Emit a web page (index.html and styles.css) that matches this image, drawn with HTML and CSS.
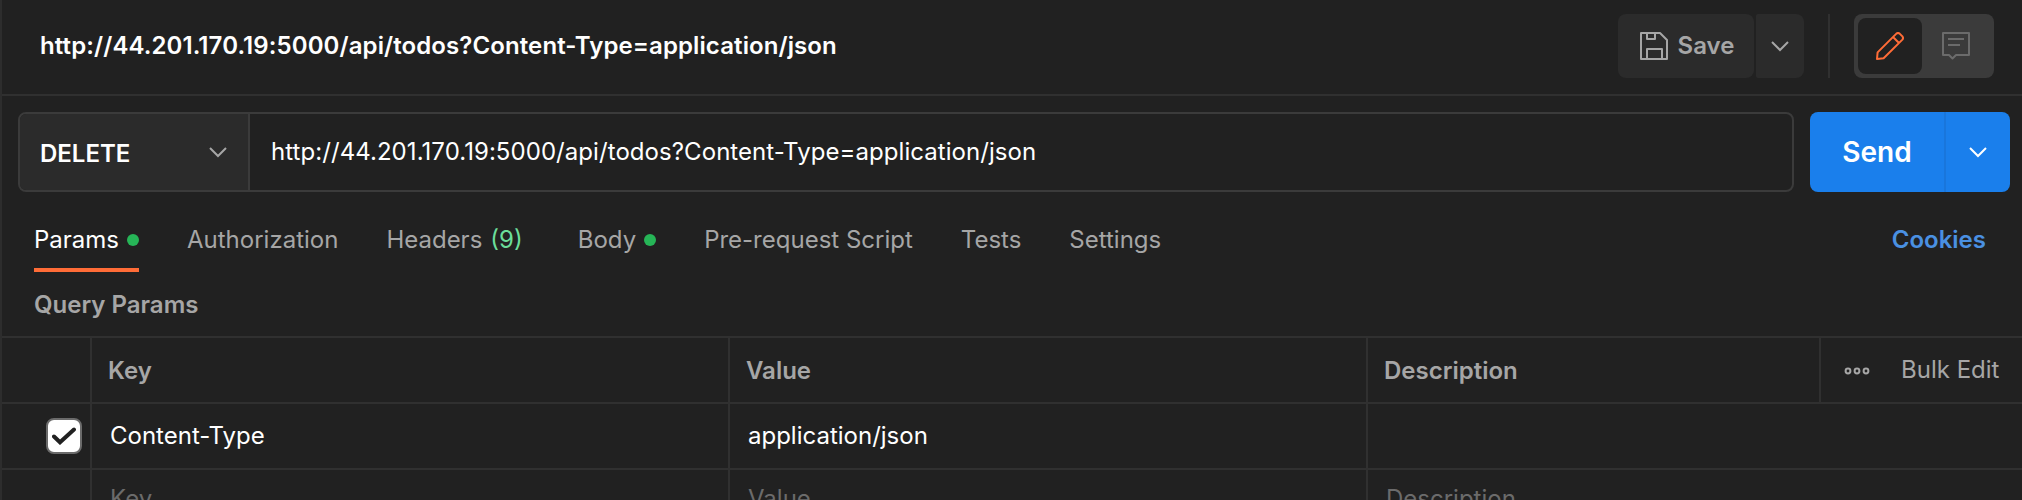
FILE: index.html
```html
<!DOCTYPE html>
<html lang="en">
<head>
<meta charset="utf-8">
<title>Request</title>
<link rel="stylesheet" href="styles.css">
</head>
<body>
<main class="pane">
  <header class="topbar">
    <h1 class="title">http://44.201.170.19:5000/api/todos?Content-Type=application/json</h1>
    <div class="save-group">
      <button class="save">
        <svg width="28" height="28" viewBox="0 0 28 28" fill="none" stroke="currentColor" stroke-width="2" stroke-linejoin="round"><path d="M1 1H20L27 8V27H1ZM7 1V7H15V1M7 27V17H22V27"/></svg>
        <span>Save</span>
      </button>
      <button class="save-more">
        <svg width="18" height="11" viewBox="0 0 18 11" fill="none" stroke="currentColor" stroke-width="2"><path d="M1 1L9 9L17 1"/></svg>
      </button>
    </div>
    <div class="divider"></div>
    <div class="modes">
      <button class="mode mode-active">
        <svg width="28" height="28" viewBox="0 0 28 28" fill="none" stroke="currentColor" stroke-width="2" stroke-linejoin="round"><path d="M1 27L1.6 20.4L20.4 1.6Q22 .4 23.6 1.6L26.4 4.4Q27.6 6 26.4 7.6L7.6 26.2ZM17 5L23 11"/></svg>
      </button>
      <button class="mode">
        <svg width="28" height="28" viewBox="0 0 28 28" fill="none" stroke="currentColor" stroke-width="2" stroke-linejoin="round"><path d="M1 1H27V23H14L10.5 26.5L7 23H1ZM6 7H22M6 13H18"/></svg>
      </button>
    </div>
  </header>

  <section class="request">
    <div class="url-box">
      <div class="method"><span>DELETE</span>
        <svg width="18" height="11" viewBox="0 0 18 11" fill="none" stroke="currentColor" stroke-width="2"><path d="M1 1L9 9L17 1"/></svg>
      </div>
      <div class="url">http://44.201.170.19:5000/api/todos?Content-Type=application/json</div>
    </div>
    <div class="send-group">
      <button class="send">Send</button>
      <button class="send-more">
        <svg width="18" height="11" viewBox="0 0 18 11" fill="none" stroke="currentColor" stroke-width="2"><path d="M1 1L9 9L17 1"/></svg>
      </button>
    </div>
  </section>

  <nav class="tabs">
    <a class="tab tab-active">Params<i class="dot"></i></a>
    <a class="tab">Authorization</a>
    <a class="tab tab-count">Headers<span class="count">(9)</span></a>
    <a class="tab">Body<i class="dot"></i></a>
    <a class="tab">Pre-request Script</a>
    <a class="tab">Tests</a>
    <a class="tab">Settings</a>
    <a class="cookies">Cookies</a>
  </nav>

  <h2 class="subtitle">Query Params</h2>

  <div class="table">
    <div class="row row-head">
      <div class="cell"></div>
      <div class="cell">Key</div>
      <div class="cell">Value</div>
      <div class="cell">Description</div>
      <div class="cell tools">
        <svg width="26" height="8" viewBox="0 0 26 8" fill="none" stroke="currentColor" stroke-width="2"><circle cx="4" cy="4" r="2.4"/><circle cx="13" cy="4" r="2.4"/><circle cx="22" cy="4" r="2.4"/></svg>
        <span>Bulk Edit</span>
      </div>
    </div>
    <div class="row">
      <div class="cell check-cell"><span class="checkbox">
        <svg width="24" height="18" viewBox="0 0 24 18" fill="none" stroke="currentColor" stroke-width="4" stroke-linecap="round"><path d="M2 9.5L8 15.3L22 2.5"/></svg>
      </span></div>
      <div class="cell">Content-Type</div>
      <div class="cell">application/json</div>
      <div class="cell wide"></div>
    </div>
    <div class="row row-empty">
      <div class="cell"></div>
      <div class="cell">Key</div>
      <div class="cell">Value</div>
      <div class="cell wide">Description</div>
    </div>
  </div>
</main>
</body>
</html>
```

FILE: styles.css
```css
* { box-sizing: border-box; }
html, body { margin: 0; height: 500px; overflow: hidden; background: #212121; }
body { font: 24px/32px Inter, "Liberation Sans", sans-serif; color: #fff; }
button { border: 0; padding: 0; margin: 0; background: none; font: inherit; color: inherit; display: flex; align-items: center; justify-content: center; }
svg { display: block; flex: none; }
h1, h2 { margin: 0; font-size: 24px; font-weight: 600; }

.pane { height: 500px; overflow: hidden; border-left: 2px solid #2d2d2d; white-space: nowrap; }

.topbar { height: 96px; padding: 14px 28px 16px 38px; border-bottom: 2px solid #303030; display: flex; color: #a6a6a6; }
.title { flex: 1; line-height: 64px; color: #fff; letter-spacing: .1px; }
.save-group { display: flex; gap: 2px; }
.save { width: 136px; gap: 10px; padding-left: 2px; background: #2b2b2b; border-radius: 8px; font-weight: 600; }
.save-more { width: 48px; background: #2b2b2b; border-radius: 2px 8px 8px 2px; }
.divider { width: 2px; margin: 0 24px; background: #303030; }
.modes { width: 140px; padding: 4px; background: #3b3b3b; border-radius: 8px; display: flex; color: #6b6b6b; }
.mode { width: 64px; flex: none; border-radius: 8px; }
.mode + .mode { width: 68px; }
.mode-active { background: #212121; color: #ff6c37; }

.request { display: flex; gap: 16px; padding: 16px 12px 0 16px; }
.url-box { flex: 1; height: 80px; display: flex; border: 2px solid #3b3b3b; border-radius: 8px; overflow: hidden; }
.method { width: 230px; padding: 0 21px 0 20px; display: flex; align-items: center; justify-content: space-between; background: #2b2b2b; border-right: 2px solid #3b3b3b; font-weight: 600; line-height: 36px; }
.method span { padding-top: 3px; }
.method svg { color: #a6a6a6; }
.url { padding-left: 21px; line-height: 75px; letter-spacing: .06px; }
.send-group { width: 200px; display: flex; background: #1a7fec; border-radius: 8px; overflow: hidden; }
.send { width: 134px; font-size: 28px; font-weight: 600; }
.send-more { width: 66px; border-left: 2px solid #1976dc; }

.tabs { display: flex; gap: 48px; height: 80px; padding: 24px 36px 0 32px; line-height: 48px; color: #a6a6a6; }
.tab { display: flex; align-items: center; height: 56px; padding-bottom: 8px; }
.tab-active { color: #fff; border-bottom: 4px solid #ff6c37; padding-bottom: 4px; }
.tab-count { padding-right: 7px; }
.dot { width: 12px; height: 12px; margin-left: 8px; border-radius: 50%; background: #26b557; }
.count { margin-left: 8px; color: #6bdd9a; }
.cookies { margin-left: auto; font-weight: 600; color: #4a90e2; }

.subtitle { height: 64px; padding: 17px 32px 0; color: #a6a6a6; }

.row { display: grid; grid-template-columns: 90px 638px 638px 453px 1fr; height: 66px; border-top: 2px solid #303030; }
.cell { padding-left: 17px; line-height: 64px; border-right: 2px solid #303030; }
.cell:last-child { border-right: 0; }
.wide { grid-column: 4 / -1; }
.row-head { color: #a6a6a6; font-weight: 600; }
.row-head .cell { padding-left: 16px; line-height: 65px; }
.row-head .tools { display: flex; align-items: center; gap: 31px; padding-left: 23px; font-weight: 400; line-height: 62px; }
.row-head .tools span { padding-bottom: 2px; }
.row:not(.row-head) .cell { padding-left: 18px; }
.row-empty { color: #6b6b6b; }
.row-empty .cell { line-height: 58px; }
.row:not(.row-head) .check-cell { padding: 14px 0 0 44px; }
.checkbox { width: 36px; height: 36px; display: flex; align-items: center; justify-content: center; border: 2px solid #6b6b6b; border-radius: 8px; background: #fff; color: #212121; }
```
